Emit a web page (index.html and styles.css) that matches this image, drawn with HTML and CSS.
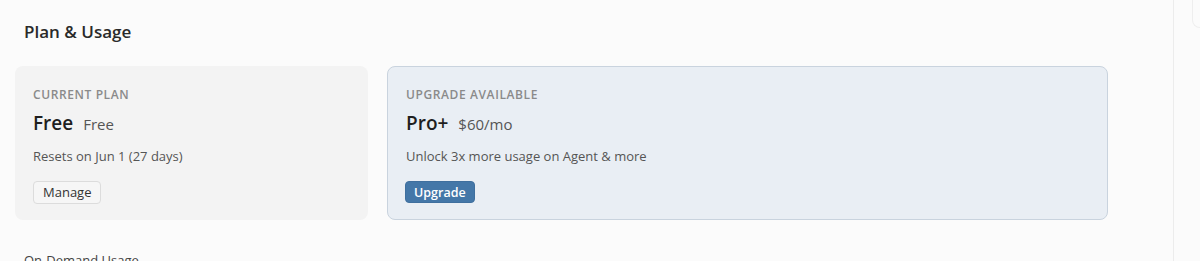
FILE: index.html
```html
<!DOCTYPE html>
<html>
<head>
<meta charset="utf-8">
<link rel="stylesheet" href="styles.css">
</head>
<body>
<div class="app">
  <main class="main">
    <h1 class="title">Plan &amp; Usage</h1>
    <div class="cards">
      <section class="card card-current">
        <div class="label">CURRENT PLAN</div>
        <div class="plan"><span class="plan-name">Free</span><span class="plan-price">Free</span></div>
        <div class="desc">Resets on Jun 1 (27 days)</div>
        <button class="btn btn-secondary">Manage</button>
      </section>
      <section class="card card-upgrade">
        <div class="label">UPGRADE AVAILABLE</div>
        <div class="plan"><span class="plan-name">Pro+</span><span class="plan-price">$60/mo</span></div>
        <div class="desc">Unlock 3x more usage on Agent &amp; more</div>
        <button class="btn btn-primary">Upgrade</button>
      </section>
    </div>
    <h2 class="subtitle">On-Demand Usage</h2>
  </main>
  <aside class="side">
    <div class="side-box"></div>
  </aside>
</div>
</body>
</html>
```
FILE: styles.css
```css
* { box-sizing: border-box; }
html, body { margin: 0; padding: 0; height: 100%; }
body {
  background: #fbfbfb;
  font-family: "Open Sans", "Noto Sans", "Liberation Sans", sans-serif;
  color: #2b2b2b;
  overflow: hidden;
}
.app {
  display: flex;
  height: 261px;
}
.main {
  width: 1173px;
  padding: 19px 0 0 15px;
}
.title {
  margin: 0 0 0 9px;
  font-size: 17px;
  font-weight: 600;
  line-height: 26px;
  color: #2a2a2a;
}
.cards {
  display: flex;
  gap: 19px;
  margin-top: 21px;
  width: 1093px;
}
.card {
  height: 154px;
  border-radius: 8px;
  padding: 21px 18px 0 18px;
}
.card-current {
  width: 353px;
  background: #f3f3f3;
}
.card-upgrade {
  flex: 1;
  background: #e9eef4;
  border: 1px solid #c9d3de;
  padding: 20px 17px 0 18px;
}
.label {
  font-size: 12px;
  font-weight: 600;
  letter-spacing: 0.6px;
  color: #8a8a8a;
  line-height: 16px;
}
.plan {
  display: flex;
  align-items: baseline;
  gap: 10px;
  margin-top: 7px;
  line-height: 26px;
}
.plan-name {
  font-size: 19px;
  font-weight: 600;
  color: #1f1f1f;
}
.plan-price {
  font-size: 15px;
  color: #555;
}
.desc {
  margin-top: 10px;
  font-size: 13px;
  line-height: 18px;
  color: #555;
}
.btn {
  display: block;
  margin-top: 16px;
  font-family: inherit;
  font-size: 13px;
  height: 23px;
  padding: 0 9px;
  border-radius: 4px;
  line-height: 21px;
  cursor: pointer;
}
.btn-secondary {
  background: #f6f6f6;
  border: 1px solid #dcdcdc;
  color: #333;
}
.btn-primary {
  margin-left: -1px;
  background: #4477a8;
  border: 1px solid #3f6f9e;
  color: #fff;
  font-size: 12.5px;
  font-weight: 600;
  height: 22px;
  padding: 0 8px;
}
.subtitle {
  margin: 31px 0 0 9px;
  font-size: 13px;
  font-weight: 400;
  color: #444;
  line-height: 18px;
}
.side {
  flex: 1;
  border-left: 1px solid #ececec;
  padding-left: 18px;
}
.side-box {
  height: 38px;
  margin-top: -10px;
  border: 1px solid #eeeeee;
  border-right: none;
  border-radius: 0 0 0 8px;
}
```
